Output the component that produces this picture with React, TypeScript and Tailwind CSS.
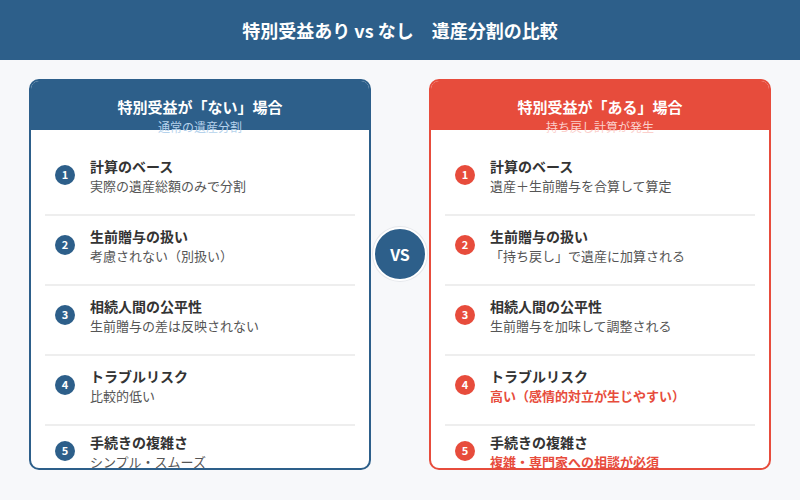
import React from "react";

type Item = { title: string; desc: string; strong?: boolean };

const left: Item[] = [
  { title: "計算のベース", desc: "実際の遺産総額のみで分割" },
  { title: "生前贈与の扱い", desc: "考慮されない（別扱い）" },
  { title: "相続人間の公平性", desc: "生前贈与の差は反映されない" },
  { title: "トラブルリスク", desc: "比較的低い" },
  { title: "手続きの複雑さ", desc: "シンプル・スムーズ" },
];

const right: Item[] = [
  { title: "計算のベース", desc: "遺産＋生前贈与を合算して算定" },
  { title: "生前贈与の扱い", desc: "「持ち戻し」で遺産に加算される" },
  { title: "相続人間の公平性", desc: "生前贈与を加味して調整される" },
  { title: "トラブルリスク", desc: "高い（感情的対立が生じやすい）", strong: true },
  { title: "手続きの複雑さ", desc: "複雑・専門家への相談が必須", strong: true },
];

function Card({
  variant,
  title,
  sub,
  items,
}: {
  variant: "blue" | "red";
  title: string;
  sub: string;
  items: Item[];
}) {
  const blue = variant === "blue";
  return (
    <div
      className={`h-[391px] rounded-[10px] border-2 overflow-hidden bg-white flex flex-col ${
        blue ? "border-[#2d5f8a]" : "border-[#e74c3c]"
      }`}
    >
      <div
        className={`h-[49px] shrink-0 flex flex-col items-center pt-[15px] ${
          blue ? "bg-[#2d5f8a]" : "bg-[#e74c3c]"
        }`}
      >
        <div className="text-[15px] leading-[22px] font-bold text-white">{title}</div>
        <div
          className={`text-[12px] leading-[18px] ${
            blue ? "text-[#b5d2ec]" : "text-[#fbd0cc]"
          }`}
        >
          {sub}
        </div>
      </div>
      <div className="px-[14px] pt-[16px] flex flex-col">
        {items.map((it, i) => {
          const last = i === items.length - 1;
          return (
            <div
              key={i}
              className={`flex items-center gap-[15px] px-[10px] ${
                last ? "pt-[6px] pb-[18px]" : "pt-[10px] pb-[18px] border-b-2 border-[#eeeeee]"
              }`}
            >
              <div
                className={`w-[20px] h-[20px] rounded-full shrink-0 flex items-center justify-center text-white text-[11px] font-bold -mt-[3px] ${
                  blue ? "bg-[#2d5f8a]" : "bg-[#e74c3c]"
                }`}
              >
                {i + 1}
              </div>
              <div className="flex flex-col">
                <div className="text-[14px] leading-[20px] font-bold text-[#333333]">
                  {it.title}
                </div>
                <div
                  className={`text-[13px] leading-[20px] ${
                    it.strong ? "text-[#e74c3c] font-bold" : "text-[#555555]"
                  }`}
                >
                  {it.desc}
                </div>
              </div>
            </div>
          );
        })}
      </div>
    </div>
  );
}

export default function App() {
  return (
    <div
      className="w-[800px] h-[500px] bg-[#f7f8fa] flex flex-col"
      style={{ fontFamily: '"Noto Sans CJK JP", "Noto Sans", sans-serif' }}
    >
      <div className="h-[60px] shrink-0 bg-[#2d5f8a] flex items-center justify-center">
        <h1 className="text-[18px] font-bold text-white">
          特別受益あり vs なし　遺産分割の比較
        </h1>
      </div>
      <div className="relative grid grid-cols-2 gap-[58px] px-[29px] pt-[19px]">
        <Card variant="blue" title="特別受益が「ない」場合" sub="通常の遺産分割" items={left} />
        <Card variant="red" title="特別受益が「ある」場合" sub="持ち戻し計算が発生" items={right} />
        <div className="absolute left-[373px] top-[167px] w-[54px] h-[54px] rounded-full bg-[#2d5f8a] border-2 border-white shadow-[0_0_0_1px_#e5e7eb] flex items-center justify-center text-white text-[16px] font-bold">
          VS
        </div>
      </div>
    </div>
  );
}
